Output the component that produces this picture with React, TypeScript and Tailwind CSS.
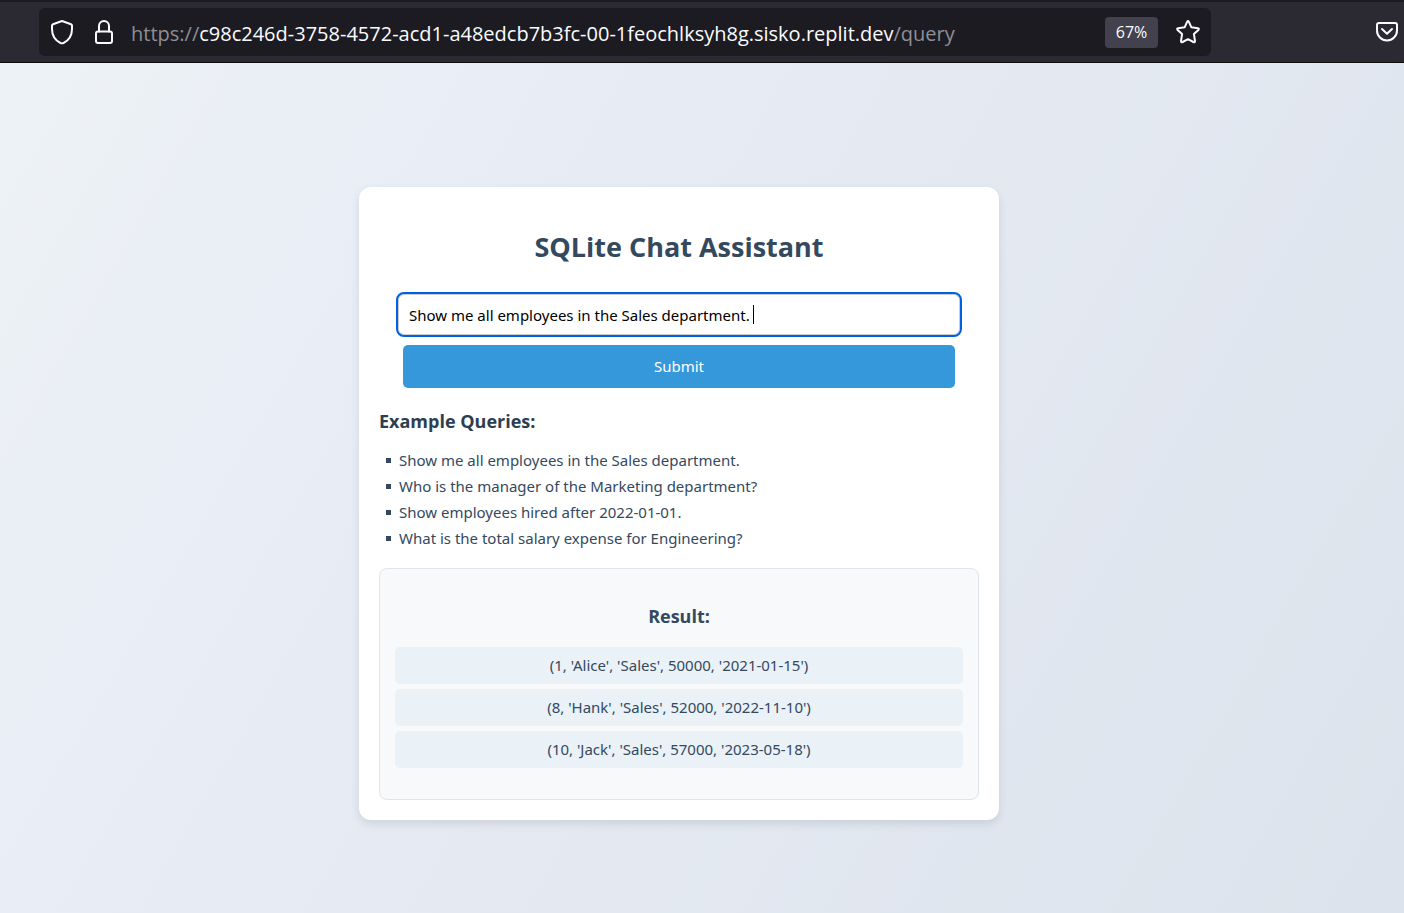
import React, { useState } from "react";

const examples = [
  "Show me all employees in the Sales department.",
  "Who is the manager of the Marketing department?",
  "Show employees hired after 2022-01-01.",
  "What is the total salary expense for Engineering?",
];

const rows = [
  "(1, 'Alice', 'Sales', 50000, '2021-01-15')",
  "(8, 'Hank', 'Sales', 52000, '2022-11-10')",
  "(10, 'Jack', 'Sales', 57000, '2023-05-18')",
];

const stroke = {
  fill: "none",
  stroke: "#fbfbfe",
  strokeWidth: 2,
  strokeLinecap: "round" as const,
  strokeLinejoin: "round" as const,
};

function ShieldIcon() {
  return (
    <svg width="24" height="26" viewBox="0 0 24 26" {...stroke} aria-hidden="true">
      <path d="M12 2 L21 5.2 Q22 5.6 22 6.6 V10 C22 17 18.5 21.5 13.5 24 Q12 24.7 10.5 24 C5.5 21.5 2 17 2 10 V6.6 Q2 5.6 3 5.2 Z" />
    </svg>
  );
}

function LockIcon() {
  return (
    <svg width="20" height="26" viewBox="0 0 20 26" {...stroke} aria-hidden="true">
      <rect x="2" y="12.5" width="16" height="11.5" rx="2" />
      <path d="M5 12.5 V7 a5 5 0 0 1 10 0 V12.5" />
    </svg>
  );
}

function StarIcon() {
  return (
    <svg width="26" height="26" viewBox="0 0 26 26" {...stroke} aria-hidden="true">
      <path d="M12.1 2.9 Q13 1.3 13.9 2.9 L16.4 8.3 L22.9 9.2 Q24.6 9.6 23.4 10.9 L18.9 15.1 L20 21.9 Q20 23.7 18.4 23 L13 20.2 L7.6 23 Q6 23.7 6 21.9 L7.1 15.1 L2.6 10.9 Q1.4 9.6 3.1 9.2 L9.6 8.3 Z" />
    </svg>
  );
}

function PocketIcon() {
  return (
    <svg width="24" height="22" viewBox="0 0 24 22" {...stroke} aria-hidden="true">
      <path d="M4 2 H20 Q22 2 22 4 V9.5 A10 10 0 0 1 2 9.5 V4 Q2 2 4 2 Z" />
      <path d="M7 8 L12 12.8 L17 8" />
    </svg>
  );
}

function BrowserBar() {
  return (
    <header className="flex h-[63px] items-center border-t-2 border-b border-t-[#1c1b22] border-b-[#0c0c0d] bg-[#2b2a33] pr-[5px] pl-[39px]">
      <div className="flex h-12 min-w-0 flex-1 items-center rounded-md bg-[#1c1b22] pr-[10px] pl-[11px]">
        <button type="button" aria-label="Tracking protection" className="shrink-0">
          <ShieldIcon />
        </button>
        <button type="button" aria-label="Site information" className="ml-5 shrink-0">
          <LockIcon />
        </button>
        <a
          href="/query"
          className="ml-[17px] min-w-0 flex-1 truncate pt-[3px] text-xl text-[#8f8f94]"
        >
          https://
          <span className="text-[#fbfbfe]">
            c98c246d-3758-4572-acd1-a48edcb7b3fc-00-1feochlksyh8g.sisko.replit.dev
          </span>
          /query
        </a>
        <button
          type="button"
          className="h-[31px] w-[53px] shrink-0 rounded bg-[#42414d] text-base text-[#fbfbfe]"
        >
          67%
        </button>
        <button type="button" aria-label="Bookmark this page" className="ml-[17px] shrink-0">
          <StarIcon />
        </button>
      </div>
      <button type="button" aria-label="Save to Pocket" className="ml-[164px] shrink-0">
        <PocketIcon />
      </button>
    </header>
  );
}

export default function App() {
  const [query, setQuery] = useState(examples[0]);

  return (
    <div className="flex min-h-screen flex-col font-['Open_Sans','Noto_Sans',sans-serif] text-[#34495e]">
      <BrowserBar />
      <main className="flex flex-1 flex-col items-center bg-[linear-gradient(120deg,#edf2f5_0%,#e9edf5_25%,#dce3ec_100%)] pt-[124px] pr-[46px] pb-10">
        <section className="w-full max-w-[640px] rounded-xl bg-white p-5 font-['Noto_Sans','Open_Sans',sans-serif] shadow-[0_4px_10px_rgba(0,0,0,0.1)]">
          <h1 className="mt-5 text-center font-['Open_Sans','Noto_Sans',sans-serif] text-[27px] leading-10 font-bold">
            SQLite Chat Assistant
          </h1>
          <form onSubmit={(e) => e.preventDefault()} className="mt-[25px] flex flex-col items-center">
            <div className="relative w-full px-[17px]">
              <input
                type="text"
                aria-label="Query"
                value={query}
                onChange={(e) => setQuery(e.target.value)}
                className="h-[45px] w-full rounded-lg border-2 border-[#0061e0] bg-white px-[11px] text-[15px] text-black caret-transparent shadow-[inset_0_0_0_1px_#cccccc] outline-none"
              />
              <span className="absolute top-[13px] left-[374px] h-[19px] w-px bg-black" />
            </div>
            <button
              type="submit"
              className="mt-2 h-[43px] w-[92%] rounded-[5px] bg-[#3498db] text-[15px] text-white"
            >
              Submit
            </button>
          </form>
          <h2 className="mt-5 font-['Open_Sans','Noto_Sans',sans-serif] text-lg leading-[26px] font-bold text-[#2c3e50]">
            Example Queries:
          </h2>
          <ul className="mt-[13px] flex flex-col">
            {examples.map((text) => (
              <li key={text} className="flex items-center text-[15px] leading-[26px]">
                <span className="mr-2 ml-[7px] size-[5px] bg-[#34495e]" />
                {text}
              </li>
            ))}
          </ul>
          <div className="mt-[17px] rounded-lg border border-[#dfe4ea] bg-[#f8f9fb] px-[15px] pt-[34px] pb-[31px]">
            <h2 className="text-center font-['Open_Sans','Noto_Sans',sans-serif] text-lg leading-[26px] font-bold">
              Result:
            </h2>
            <ul className="mt-[18px] flex flex-col gap-[5px]">
              {rows.map((row) => (
                <li key={row} className="rounded-[5px] bg-[#eaf1f7] text-center text-[15px] leading-[37px]">
                  {row}
                </li>
              ))}
            </ul>
          </div>
        </section>
      </main>
    </div>
  );
}
